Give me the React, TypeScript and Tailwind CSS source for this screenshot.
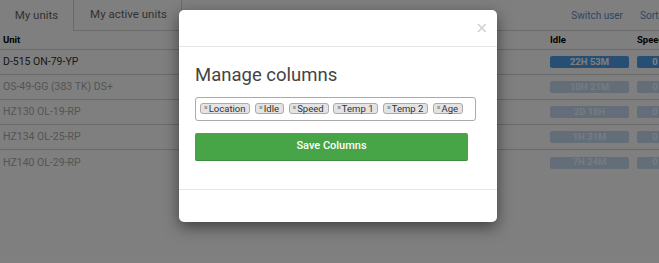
import React from "react";

const rows = [
  { unit: "D-515 ON-79-YP", idle: "22H 53M", speed: "0", active: true },
  { unit: "OS-49-GG (383 TK) DS+", idle: "10H 21M", speed: "0", active: false },
  { unit: "HZ130 OL-19-RP", idle: "2D 18H", speed: "0", active: false },
  { unit: "HZ134 OL-25-RP", idle: "1H 31M", speed: "0", active: false },
  { unit: "HZ140 OL-29-RP", idle: "7H 24M", speed: "0", active: false },
];

const tags = ["Location", "Idle", "Speed", "Temp 1", "Temp 2", "Age"];

export default function App() {
  return (
    <div className="relative w-[659px] h-[263px] overflow-hidden bg-white font-['Roboto',sans-serif]">
      {/* Page */}
      <div className="flex flex-col">
        <div className="flex h-[31px] items-stretch">
          <div className="w-[74px] flex items-center justify-center text-[11.5px] text-[#666] border-r border-[#d5d5d5]">
            My units
          </div>
          <div className="w-[108px] flex items-center justify-center pl-[2px] text-[11.5px] text-[#666] border-r border-b border-[#d5d5d5]">
            My active units
          </div>
          <div className="flex-1 flex items-center justify-end gap-[17px] border-b border-[#d5d5d5] text-[10px] text-[#5590cc]">
            <span>Switch user</span>
            <span className="w-[19px] overflow-hidden whitespace-nowrap">Sort</span>
          </div>
        </div>
        <div className="grid grid-cols-[550px_87px_22px] h-[19px] items-center border-b border-[#d5d5d5] text-[9.5px] font-bold text-black">
          <span className="pl-[3px] pt-[1px]">Unit</span>
          <span className="pt-[1px]">Idle</span>
          <span className="pt-[1px] whitespace-nowrap overflow-hidden">Speed</span>
        </div>
        {rows.map((r, i) => (
          <div
            key={r.unit}
            className={`grid grid-cols-[550px_87px_22px] h-[25px] items-center ${i < rows.length - 1 ? "border-b border-[#d5d5d5]" : ""}`}
          >
            <span className={`pl-[3px] text-[10.5px] ${r.active ? "text-[#333]" : "text-[#aaa]"}`}>{r.unit}</span>
            <span
              className={`w-[79px] h-[12px] rounded-[2px] flex items-center justify-center text-[9.5px] font-bold ${r.active ? "bg-[#4f9fe8] text-white" : "bg-[#c6dcf2] text-[#eef6ff]"}`}
            >
              {r.idle}
            </span>
            <span
              className={`w-[36px] h-[12px] rounded-[2px] flex items-center justify-center text-[9.5px] font-bold ${r.active ? "bg-[#4f9fe8] text-white" : "bg-[#c6dcf2] text-[#eef6ff]"}`}
            >
              {r.speed}
            </span>
          </div>
        ))}
      </div>

      {/* Backdrop */}
      <div className="absolute inset-0 bg-black/50" />

      {/* Modal */}
      <div className="absolute left-[179px] top-[10px] w-[318px] h-[212px] bg-white rounded-[5px] shadow-[0_5px_15px_rgba(0,0,0,0.5)] flex flex-col">
        <div className="h-[37px] border-b border-[#e5e5e5] flex items-center justify-end pr-[9px]">
          <span className="text-[15px] leading-none text-[#cfcfcf] font-['DejaVu_Sans',sans-serif]">×</span>
        </div>
        <div className="h-[143px] border-b border-[#e5e5e5] px-[16px] pt-[17px]">
          <h2 className="text-[18.5px] leading-[22px] text-[#444] font-normal">Manage columns</h2>
          <div className="mt-[11px] w-[281px] h-[24px] border border-[#aaa] rounded-[3px] flex items-center pl-[4px] pb-[1px] gap-[4.5px]">
            {tags.map((t) => (
              <span
                key={t}
                className="h-[11px] flex items-center pl-[3px] pr-[4px] gap-[1px] bg-[#e4e4e4] border border-[#aaa] rounded-[3px] text-[9.5px] leading-none text-[#333]"
              >
                <span className="text-[7px] text-[#888] font-bold">×</span>
                {t}
              </span>
            ))}
          </div>
          <button className="mt-[12px] w-[273px] h-[28px] bg-[#47a447] border-b border-[#3d8b3d] rounded-[2px] text-white text-[11px] font-medium flex items-center justify-center">
            Save Columns
          </button>
        </div>
        <div className="flex-1" />
      </div>
    </div>
  );
}
